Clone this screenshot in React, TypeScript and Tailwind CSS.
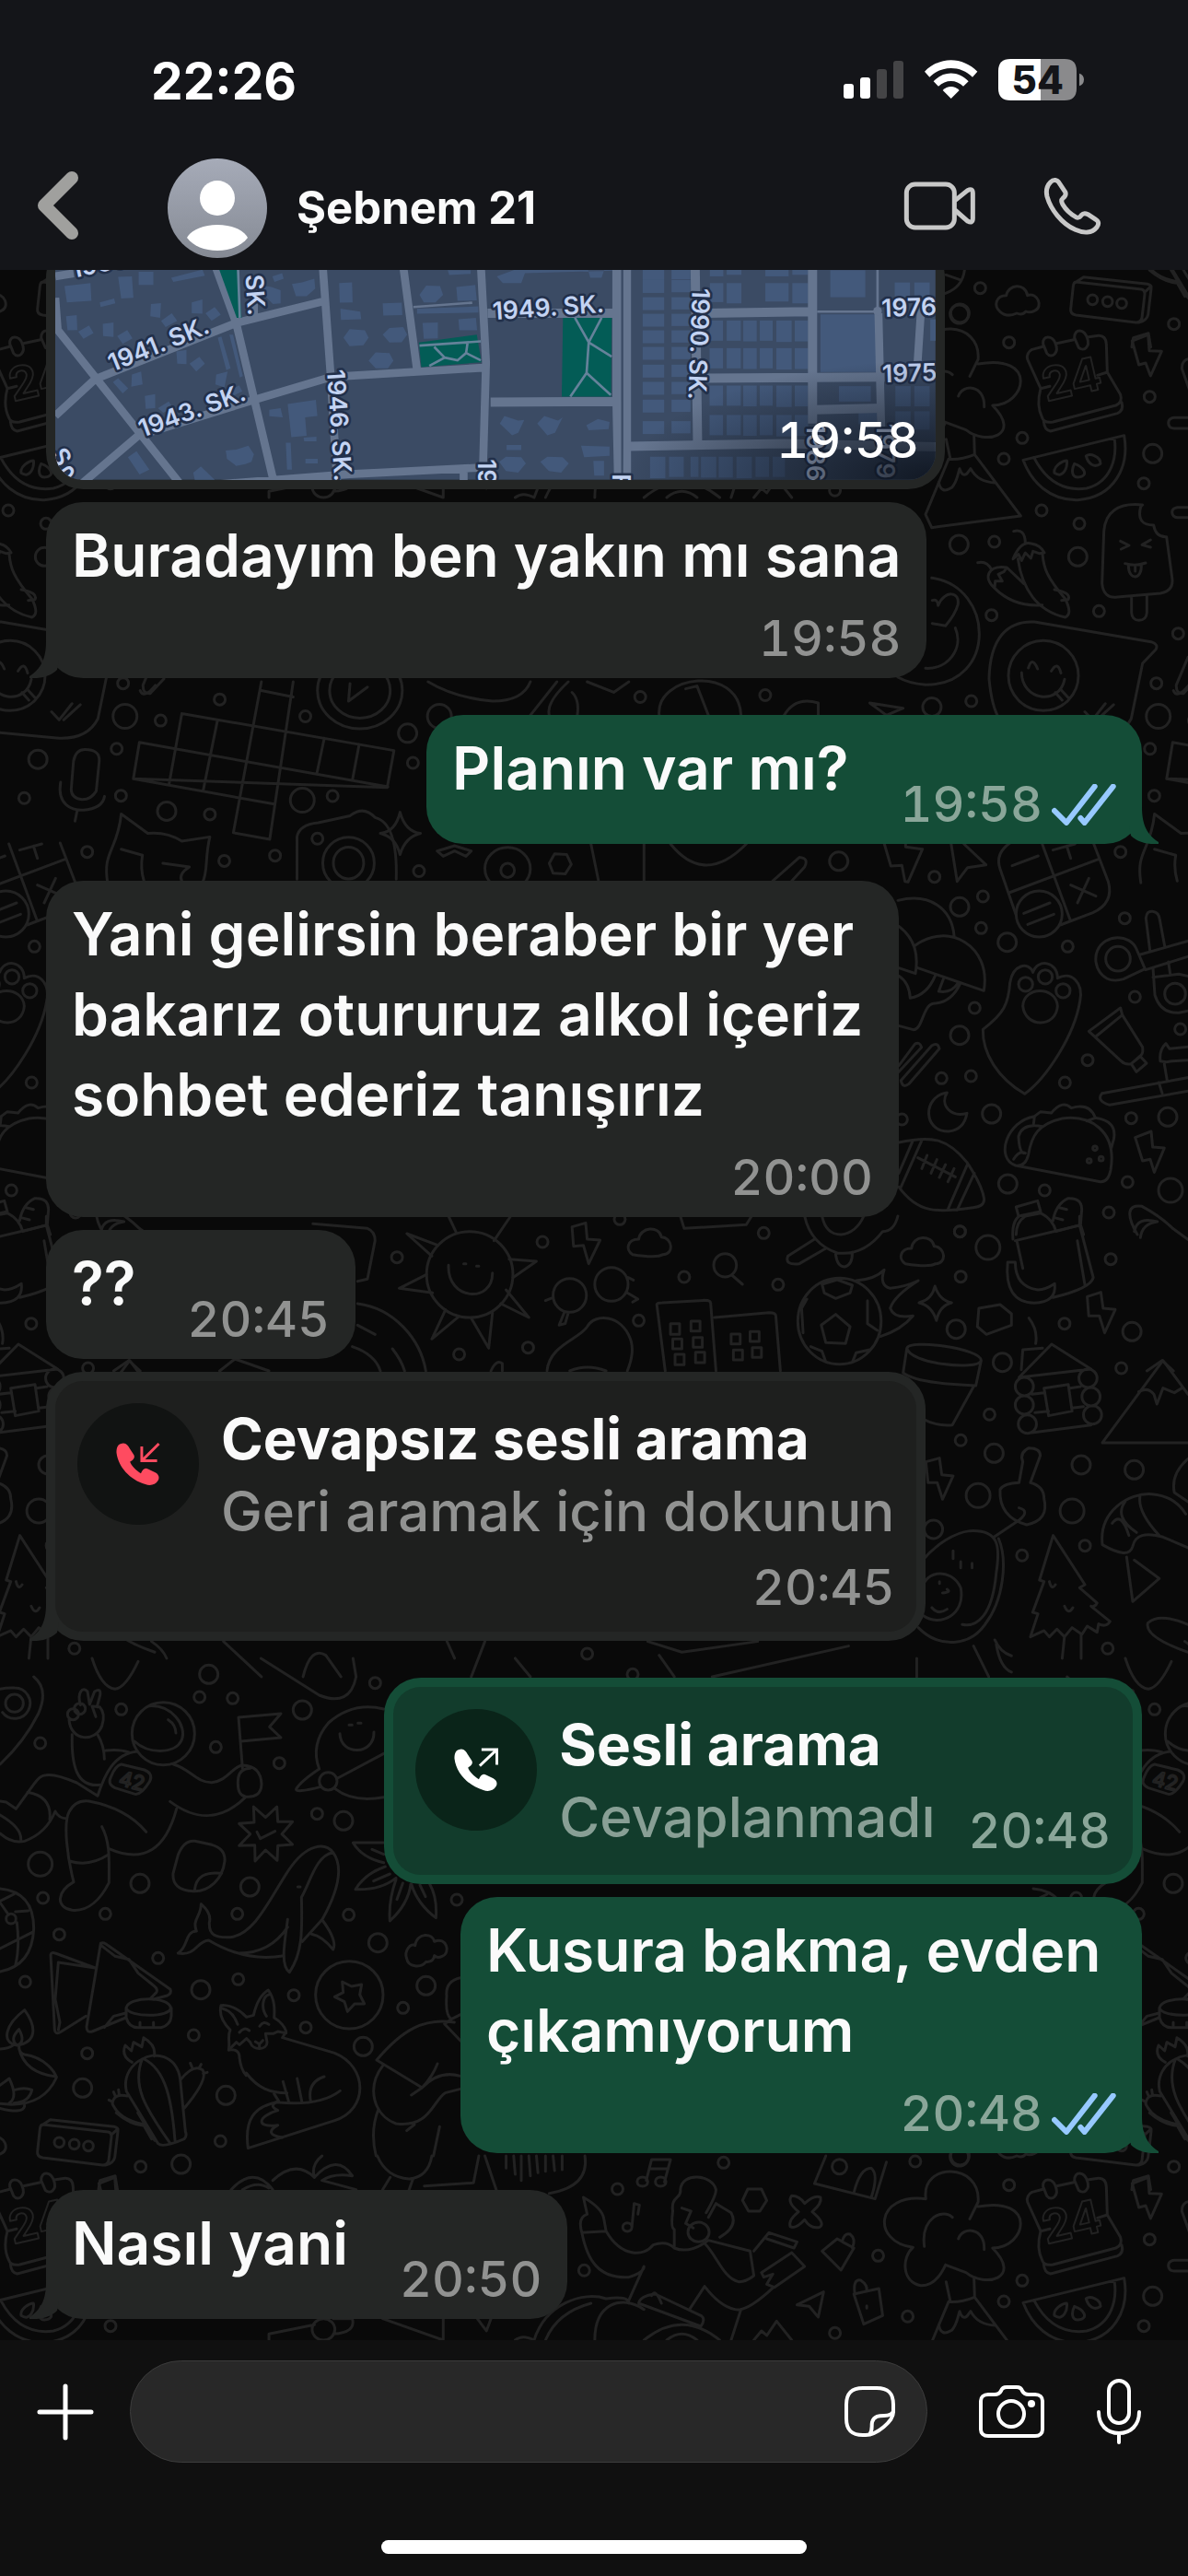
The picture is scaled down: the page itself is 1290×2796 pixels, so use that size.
import { useState } from "react";
import type { ReactNode } from "react";

type Side = "in" | "out";

// ── Wallpaper ───────────────────────────────────────────────────────────────

type Sheet = {
  x: number;
  y: number;
  sx: number;
  sy: number;
  paths: string[];
  dots: [number, number, number][];
};

const TILE_W = 1122;
const TILE_H = 2000;

const SHEETS: Sheet[] = [
  {
    // cassette, calendar, melon, peppers, ice cream
    x: 950, y: 290, sx: 1 / 3, sy: 1 / 3,
    paths: [
      "M408 145C385 125 395 92 428 92C435 55 490 50 497 92C530 80 550 130 520 142Q505 150 492 144Q480 158 462 150Q430 165 408 145Z",
      "M655 48L868 72Q880 74 879 88L870 165Q866 180 850 180L655 156Q636 152 638 136L646 62Q648 48 655 48ZM650 52L680 32L888 55Q902 58 900 70L890 155Q885 175 860 180M878 82L900 62",
      "M693 106a16 16 0 1 0 32 0a16 16 0 1 0 -32 0M742 112a16 16 0 1 0 32 0a16 16 0 1 0 -32 0M788 118a16 16 0 1 0 32 0a16 16 0 1 0 -32 0",
      "M540 395L497 300Q492 280 512 268L550 258M592 248L648 236M692 228L728 223Q752 222 754 250L757 342L800 415Q808 440 785 450L580 504Q550 508 545 490Q525 450 540 395L570 388M725 352L757 342M550 502Q552 530 572 534L790 476Q812 466 804 440",
      "M548 250C545 220 580 222 588 248C602 280 575 300 560 280ZM650 230C650 198 682 200 692 232C702 260 680 276 664 262Z",
      "M838 240L890 220L894 272L934 274L898 354L882 312L860 318Z",
      "M483 628L812 548C830 650 780 750 660 758C570 760 510 700 483 628ZM518 620C560 700 620 730 690 720C770 700 790 620 780 556M585 670C580 650 610 630 625 630C628 650 615 690 585 670ZM650 640C680 650 700 680 662 684C640 684 640 660 650 640ZM688 615C700 605 735 615 735 640C715 655 695 640 688 615Z",
      "M240 625L165 805L185 848L475 810L325 610Q280 628 240 625ZM208 700Q215 740 250 718C268 700 268 680 276 656Q285 685 300 672L312 656Q335 700 392 702M232 560L246 625M323 550L325 610",
      "M872 774C790 765 750 800 746 860L740 1030Q745 1080 790 1074L930 1062Q975 1055 968 1010L950 878Q915 880 908 840Q850 840 866 780ZM836 1074V1125Q838 1150 860 1150Q884 1150 886 1125V1070",
      "M800 892L828 906L802 918M898 888L870 904L898 912M815 965Q850 975 882 963M826 972C826 1020 870 1020 868 970M848 972V990",
      "M452 860Q490 850 490 900M450 950Q475 890 510 900Q540 905 552 930L535 932L515 925L508 948L490 930L478 955L468 935ZM466 950C480 1050 530 1120 620 1140Q645 1130 620 1080C560 1010 550 980 546 935",
      "M335 962Q365 955 380 985M390 1045C350 1010 370 970 430 978L420 992L402 1000L415 1022L392 1022ZM390 1045C430 1085 480 1105 545 1100M430 978L485 1030M585 1050Q640 1060 630 1082L608 1085",
      "M520 1155L900 1220Q925 1228 915 1245L872 1290L835 1470Q800 1540 700 1533L450 1510Q385 1490 372 1340C375 1210 430 1150 520 1155Z",
      "M435 1330a114 114 0 1 0 228 0a114 114 0 1 0 -228 0M500 1305Q512 1265 530 1308M575 1315Q595 1280 606 1322M478 1320C478 1410 600 1430 618 1342M588 1385L610 1410M605 1375L630 1402",
      "M185 1012C390 1040 400 1360 165 1360Q110 1355 75 1335M187 1085Q205 1080 206 1102C225 1050 280 1055 270 1100Q262 1130 230 1168L187 1160M262 1175C290 1240 240 1310 165 1306",
      "M1020 490H975Q956 492 956 508Q958 525 975 525H1030M1030 782H985Q968 785 968 798Q970 815 985 815H1030M895 10Q940 48 985 52L1010 95M965 10L1020 100M1050 300Q1000 290 1000 330L1025 400M1020 1270L982 1360Q980 1390 1005 1388L1050 1340",
      "M230 85Q285 65 292 10M232 25L275 40",
    ],
    dots: [
      [343, 68, 6], [437, 245, 6], [974, 185, 6], [895, 422, 6], [480, 556, 6], [420, 624, 6], [876, 704, 6],
      [543, 792, 6], [666, 835, 6], [389, 894, 6], [380, 1133, 6], [730, 1120, 6], [988, 1193, 6], [917, 1355, 6],
      [275, 153, 10], [905, 607, 10], [274, 903, 10], [661, 943, 10],
    ],
  },
  {
    // pills, paw, razor, taco, football
    x: 930, y: 840, sx: 1 / 3, sy: 1 / 3,
    paths: [
      "M90 225L112 300L148 298L158 350L168 352L215 245L160 238V210M308 225L328 350L362 305L422 296L350 228",
      "M500 225Q450 260 468 310L520 460M664 492L770 452Q840 420 820 350L772 225M605 228L697 478M497 387L790 277M507 299L592 267M640 248L712 228M685 235L698 275M698 362L780 398M757 340L720 420",
      "M520 456a75 75 0 1 0 150 0a75 75 0 1 0 -150 0M545 454L630 420M558 490L643 457",
      "M135 412C240 385 310 440 318 526M138 496Q210 550 192 650L138 632M192 558C300 480 440 560 415 706L200 632M256 658Q230 720 175 730Q172 680 138 658M283 668L268 708Q310 715 330 682M338 682Q310 745 250 748C215 755 215 835 185 833L138 820",
      "M412 832C480 780 495 750 500 680C510 620 560 610 575 646C590 600 655 610 655 665C700 640 740 680 728 740C710 850 620 990 548 1042C460 990 410 910 412 832ZM542 756C545 690 650 690 655 756C650 828 550 828 542 756Z",
      "M528 685a23 23 0 1 0 46 0a23 23 0 1 0 -46 0M592 661a23 23 0 1 0 46 0a23 23 0 1 0 -46 0M650 706a23 23 0 1 0 46 0a23 23 0 1 0 -46 0",
      "M940 635L870 668C800 690 765 620 785 575C810 520 890 520 912 570ZM812 602a40 40 0 1 0 80 0a40 40 0 1 0 -80 0M925 588L1095 540M942 638L1095 590M956 575L943 470Q945 445 965 448Q985 450 988 475L1004 560M966 632L972 720Q990 780 1050 778L1090 770M966 662L1050 652L1095 662M1004 716a34 34 0 1 0 68 0a34 34 0 1 0 -68 0M1016 612L1022 652",
      "M757 838L860 762L866 785L932 890Q935 910 925 918L895 944Q875 948 862 935ZM780 855L866 785M895 944L925 920L945 942L912 970Z",
      "M990 935Q985 900 1008 878L1020 895L1085 888M990 935L1010 938L1028 935L1085 932M1003 945L1012 998M800 1040L1085 988M825 1078L1085 1032M800 1040Q780 1065 825 1078M985 1005L996 1040",
      "M138 950L190 880Q205 870 212 890L138 970M145 998L245 885Q265 872 270 895L170 1010Q150 1025 145 998Z",
      "M295 1038C215 1050 215 1165 300 1164Q350 1160 360 1105C310 1120 270 1080 295 1038Z",
      "M138 1200C250 1175 300 1190 360 1265Q410 1340 416 1385Q415 1410 380 1412C260 1430 200 1430 138 1345M182 1198L138 1300M212 1195L145 1345M362 1270L297 1420M384 1300L328 1420M200 1250L322 1312M230 1242L213 1285M262 1256L243 1300M290 1272L270 1314M318 1285L298 1328",
      "M518 1275L795 1328Q820 1330 828 1290C850 1160 760 1110 670 1122C590 1140 570 1180 560 1240Q550 1280 518 1275ZM518 1275C450 1250 490 1130 580 1115L600 1100L635 1104Q670 1060 700 1088Q760 1070 778 1120Q850 1130 838 1190L830 1218M750 1130L778 1120M577 1140L580 1115M606 1148Q540 1135 528 1180Q530 1230 545 1235M512 1255Q530 1225 550 1235",
      "M770 1219a7 7 0 1 0 14 0a7 7 0 1 0 -14 0M790 1253a7 7 0 1 0 14 0a7 7 0 1 0 -14 0M751 1260a7 7 0 1 0 14 0a7 7 0 1 0 -14 0",
      "M908 1184L960 1164L965 1215L1003 1218L970 1297L957 1255L932 1260Z",
      "M528 1440L520 1410L590 1390L600 1425ZM520 1500Q520 1460 550 1440L600 1430Q640 1450 650 1490L730 1468L740 1500M640 1455Q650 1400 690 1382Q740 1380 733 1430L730 1468M660 1412L685 1418M645 1445L672 1452",
      "M915 1500C880 1440 880 1400 930 1408Q990 1440 1030 1480L1085 1520M905 1490Q915 1440 980 1458Q930 1465 925 1510",
    ],
    dots: [
      [970, 71, 6], [860, 254, 6], [254, 335, 6], [412, 399, 6], [406, 502, 6], [688, 562, 6], [874, 470, 6],
      [385, 762, 6], [907, 726, 6], [1055, 831, 6], [753, 932, 6], [679, 1005, 6], [373, 984, 6], [277, 991, 6],
      [148, 1125, 6], [895, 1121, 6], [883, 1329, 6], [613, 1356, 6], [822, 1428, 6], [337, 1490, 6],
      [336, 433, 10], [491, 548, 10], [336, 851, 10], [440, 1107, 10], [1014, 1117, 10], [493, 1335, 10], [1023, 1356, 13],
    ],
  },
  {
    // astronaut, whale, fox, cactus
    x: 0, y: 1820, sx: 1 / 3, sy: 1 / 3,
    paths: [
      "M0 40Q20 35 48 36a50 50 0 1 1 -40 80M18 86a29 29 0 1 0 58 0a29 29 0 1 0 -58 0M110 0Q160 40 125 120Q80 210 0 285",
      "M225 140C230 210 310 215 332 160Q345 120 325 98L300 96L312 130M262 92C250 50 270 30 285 48L292 90L308 48Q330 35 326 60L316 98M220 122a18 18 0 1 0 36 0a18 18 0 1 0 -36 0M242 104a18 18 0 1 0 36 0a18 18 0 1 0 -36 0",
      "M235 188C232 290 250 360 325 352M318 188Q340 225 340 268M345 240Q390 235 420 246",
      "M430 185a102 102 0 1 0 204 0a102 102 0 1 0 -204 0M485 95C560 90 610 160 592 205C570 255 480 250 438 210M548 140Q572 155 573 183",
      "M448 243C370 250 340 320 318 388L250 345Q180 315 150 320Q130 320 110 350L52 430L20 408L0 405M90 376Q170 390 162 465M0 450Q70 490 68 530M0 510Q40 545 80 535Q150 510 180 438Q190 460 218 462",
      "M395 285L470 303Q500 315 488 340Q460 385 440 382L375 362Q348 350 362 325Q375 290 395 285Z",
      "M565 285C620 300 640 345 690 344C740 340 760 290 790 288Q850 290 852 350Q850 395 800 390Q770 385 776 330Q780 300 815 298M800 392C720 470 640 470 554 406M575 430C540 560 470 610 355 560",
      "M790 298L777 132L915 120L878 163L915 198L785 210",
      "M332 488C360 540 355 600 355 670C330 720 290 765 235 760C180 750 185 700 240 668C220 590 205 480 225 440Q245 400 290 405C370 420 430 450 476 505M226 600Q290 620 352 580",
      "M635 535L690 547Q735 560 732 600C725 660 680 700 630 698Q560 695 564 640L580 580Q600 530 635 535ZM634 695Q640 630 722 640",
      "M826 423L865 458L902 423L905 472L953 472L918 512L953 546L905 550L903 598L865 564L831 600L830 548L779 550L815 512L779 478L828 474ZM837 505L848 527L896 503",
      "M1250 105Q1150 80 1070 150Q1010 220 1040 300M1040 300Q980 340 965 365Q960 380 1045 358M1100 330L1250 250M1092 365Q1150 410 1250 392M1040 340a29 29 0 1 0 58 0a29 29 0 1 0 -58 0M1107 185C1110 260 1220 255 1218 180M1137 157h10M1166 151h10",
      "M682 800C680 840 700 850 750 848C830 840 880 720 940 630C1000 540 1060 540 1085 572C1120 620 1100 700 1050 790L985 862M1085 572C1030 580 1010 670 982 718C985 830 985 900 943 962C910 940 930 850 937 790M682 800Q690 770 655 740C655 780 625 790 640 828C600 830 615 880 580 900C640 910 640 860 680 858C750 900 830 925 925 908M780 900Q880 900 937 815M1050 792Q1100 860 1085 888Q1050 845 1015 838M970 684h8",
      "M165 905Q168 895 180 900L310 948M165 905L178 1150Q180 1165 195 1158L280 1105M190 930L180 1050L195 1125L190 1150M190 930L310 948M328 868Q335 864 345 870L555 1018Q560 1030 545 1038L500 1050M328 868L282 1140Q282 1160 300 1155L410 1110M330 875L375 910L420 920L450 965L500 1005Q520 1020 505 1032L490 1048M340 1142L370 1105L410 1095",
      "M411 1078C420 1040 550 1040 556 1078C555 1110 420 1110 411 1078V1110Q420 1142 450 1142H525Q555 1135 558 1105V1078M456 1125V1140M500 1125V1140",
      "M0 730L45 708M0 735L28 775M50 765L92 762M55 800Q65 880 50 940M0 885L105 832M0 690Q110 700 110 820Q105 940 0 960M20 788a16 16 0 1 0 32 0a16 16 0 1 0 -32 0",
      "M80 1085C20 1130 0 1190 55 1200C120 1190 120 1140 80 1085ZM62 1148Q30 1180 55 1200Q85 1190 62 1148ZM0 1212Q30 1210 45 1198M62 1200Q60 1225 80 1230C150 1240 180 1290 184 1305C150 1380 80 1400 0 1390M62 1210Q80 1290 184 1302M0 1330L30 1308Q60 1370 30 1388M48 1345Q80 1335 104 1345Q95 1385 45 1388M0 1405Q80 1425 80 1395",
      "M463 1245C430 1260 400 1300 412 1350L515 1520Q530 1535 600 1505Q610 1495 604 1480L587 1310C575 1230 500 1220 463 1245ZM463 1245C430 1330 470 1400 555 1520M470 1245C540 1280 560 1380 570 1510M430 1255C400 1240 400 1220 408 1200L428 1218L435 1190L462 1205L468 1175Q510 1200 502 1235M590 1310Q630 1260 660 1280Q680 1310 600 1405M620 1258L625 1270M655 1262L648 1275M675 1288L662 1292M415 1365Q370 1355 366 1390Q390 1445 475 1458M355 1378L366 1384M370 1352L376 1366M386 1345L388 1360",
      "M745 1215C750 1190 740 1170 750 1150C720 1120 715 1090 720 1070Q760 1065 803 1108L826 1102Q840 1040 874 1020C895 1050 895 1080 893 1110Q925 1130 932 1155L920 1175L1090 1225C1200 1270 1200 1410 1090 1445L808 1535C795 1440 830 1400 900 1385M745 1215Q780 1210 780 1240Q785 1280 802 1298M802 1290C840 1340 880 1355 935 1355M725 1080Q760 1090 774 1132M868 1105C850 1080 855 1040 876 1035",
      "M780 1158Q795 1138 812 1152M846 1138Q858 1118 876 1132M745 1215L770 1190L780 1198L803 1178L815 1190C825 1220 870 1215 870 1190L865 1162L890 1162L905 1155L932 1160M832 1188L845 1196L856 1184M845 1196V1210",
      "M900 1385C880 1395 890 1405 905 1412C840 1430 830 1470 905 1460C870 1480 880 1495 920 1500M900 1385Q1040 1400 1108 1348M1012 1382Q1000 1320 1056 1302M968 1308L983 1382M922 1318L940 1382M893 1358L908 1382",
      "M1028 1036a110 110 0 1 0 220 0a110 110 0 1 0 -220 0M1115 993L1145 1008L1178 1002L1172 1035L1187 1065L1155 1065L1132 1090L1122 1058L1090 1042L1118 1028Z",
      "M1325 918C1315 890 1340 865 1352 875C1360 830 1410 835 1415 862C1455 845 1470 900 1440 910Q1425 918 1415 908Q1412 930 1388 928C1370 950 1330 945 1325 918Z",
      "M1250 540L1150 540Q1180 590 1250 605M1212 562L1250 578M1255 618Q1190 640 1158 692Q1240 695 1290 655M1217 665L1270 642M1290 660Q1265 730 1270 795Q1330 740 1338 675M1312 672L1293 725M1340 675Q1360 740 1420 785Q1425 720 1400 675M1368 678L1386 716",
      "M1500 980Q1450 990 1455 1040Q1450 1100 1470 1115L1448 1130L1500 1185M1470 1115L1500 1100M1480 1125C1380 1110 1310 1150 1227 1248L1375 1338L1340 1362M1425 1260Q1410 1300 1375 1338Q1430 1280 1500 1300M1248 1265C1190 1340 1220 1430 1290 1455C1400 1470 1410 1380 1450 1355L1500 1342M1232 1410Q1205 1480 1225 1560M1432 1465L1412 1560M1325 1478L1350 1458",
      "M300 -60Q330 35 375 40Q410 35 450 -50M850 -60L1040 60Q1140 100 1160 0L1150 -60",
    ],
    dots: [
      [650, 66, 6], [758, 70, 6], [395, 106, 6], [131, 216, 6], [703, 229, 6], [910, 281, 6], [1033, 446, 6],
      [1222, 20, 6], [140, 720, 6], [343, 772, 6], [193, 839, 6], [773, 772, 6], [1136, 775, 6], [515, 916, 6],
      [82, 993, 6], [776, 985, 6], [957, 1037, 6], [1313, 1078, 6], [996, 1142, 6], [631, 1167, 6], [284, 1226, 6],
      [718, 1512, 6], [1488, 726, 6], [985, 108, 10], [1119, 469, 10], [456, 673, 10], [814, 684, 10], [1231, 866, 10],
      [1388, 1006, 10], [654, 1019, 10], [1183, 1204, 10], [269, 1339, 10], [736, 1363, 10], [131, 610, 13],
      [680, -8, 10], [2061, -8, 6],
    ],
  },
  {
    // crossword, microphone, cat, camera
    x: 0, y: 740, sx: 0.8227, sy: 0.3827,
    paths: [
      "M240 90L520 195L511 300L176 275L184 172L512 298M176 275L362 347M240 90L223 292M287 110L268 310M387 0L356 447L308 428L345 0M345 25L387 43M428 160L418 262M474 178L465 280",
      "M112 192Q132 192 131 225L127 310Q120 335 108 334Q94 330 94 305L97 225Q100 192 112 192ZM80 285C75 350 95 365 110 364Q135 360 138 325M102 364L99 395",
      "M142 570C135 480 155 480 160 375L195 430Q220 425 240 452L277 440C270 500 275 540 267 570M160 475L188 492Q185 530 190 565M215 515L250 525Q235 545 240 565",
      "M392 560V440Q395 405 420 400L462 380Q480 350 495 385Q525 400 523 560M426 514a34 73 0 1 0 68 0a34 73 0 1 0 -68 0M440 514a20 45 0 1 0 40 0a20 45 0 1 0 -40 0",
      "M528 370Q535 425 555 430Q535 440 528 490Q522 440 502 430Q522 425 528 370Z",
      "M419 25a56 108 0 1 0 112 0a56 108 0 1 0 -112 0M435 25a40 78 0 1 0 80 0a40 78 0 1 0 -80 0M462 5L460 55L485 15",
      "M565 0Q600 45 650 55Q690 55 700 0M735 0L700 95M750 0Q720 60 725 95M755 30Q765 50 762 95M775 0L810 30L830 0M870 95C865 -20 975 -50 978 95M905 20L920 12L935 95M1035 95Q1050 40 1080 60V95M1148 60L1192 75L1170 95Z",
      "M640 530a30 60 0 1 0 60 0a30 60 0 1 0 -60 0M661 535a9 20 0 1 0 18 0a9 20 0 1 0 -18 0M732 488L748 490L754 518L746 545L730 543L725 515ZM780 460L790 565M850 460V565M885 460Q930 580 985 460M1020 565L1055 498Q1068 500 1062 525L1045 565M577 480L600 465L622 480L615 495L600 480L585 495Z",
      "M185 25Q190 50 205 10M68 85L78 108L95 62M84 108L106 65",
    ],
    dots: [
      [290, 50, 6], [165, 98, 13], [212, 110, 6], [403, 98, 6], [154, 190, 6], [50, 220, 10], [32, 330, 6], [220, 367, 10],
      [277, 376, 6], [399, 336, 13], [439, 324, 6], [538, 146, 10], [545, 230, 6], [296, 508, 6], [363, 493, 6],
      [419, 445, 6], [553, 537, 6], [845, 43, 6], [1010, 38, 6], [1230, 72, 10], [1282, 55, 6], [580, 98, 13], [1107, 509, 10],
    ],
  },
  {
    // sun, buildings, football, cabin, avocado, pine
    x: 0, y: 1320, sx: 0.8227, sy: 0.3333,
    paths: [
      "M563 190a57 140 0 1 0 114 0a57 140 0 1 0 -114 0M592 160C590 275 650 285 650 185M612 155h3M629 163h3",
      "M578 95L537 57L570 130M563 190L527 235L571 250M588 305L570 400L605 328M622 332L645 430L650 315M668 240L698 330L661 285M672 140L708 147L677 200M652 80L674 0M602 52L592 0",
      "M755 35L773 22L775 75L792 78L777 155L770 95L757 98Z M1435 262L1453 248L1456 300L1472 304L1458 380L1451 325L1437 325Z M1222 800L1240 788L1243 842L1258 846L1244 922L1237 868L1225 868Z",
      "M835 125C825 110 828 75 843 75C845 35 870 30 873 68C888 70 890 125 875 125C868 135 848 130 835 125ZM1195 155C1185 140 1188 105 1203 105C1205 60 1230 60 1233 98C1248 100 1250 155 1235 155C1228 165 1208 160 1195 155Z",
      "M730 258a22 55 0 1 0 44 0a22 55 0 1 0 -44 0M785 222a22 55 0 1 0 44 0a22 55 0 1 0 -44 0M745 312L738 355L746 350L750 315M828 250L842 270L835 280M730 265L720 275M829 200L836 208",
      "M942 160a15 38 0 1 0 30 0a15 38 0 1 0 -30 0M966 192L980 222",
      "M878 504L867 290Q866 282 874 282L930 274Q938 274 938 284L945 504M943 330L1015 314Q1024 314 1024 325L1030 504",
      "M885 350h12v35h-12zM912 342h12v32h-12zM888 400h12v32h-12zM915 395h12v32h-12zM891 450h12v34h-12zM918 443h12v34h-12zM965 384h12v32h-12zM990 376h12v32h-12zM968 436h12v32h-12zM993 428h12v32h-12z",
      "M1053 342a55 140 0 1 0 110 0a55 140 0 1 0 -110 0M1103 320L1122 360L1116 415L1090 412L1084 355ZM1085 222L1105 207L1125 225L1122 250L1103 268L1088 250ZM1065 270L1058 300L1060 380M1145 275V350L1158 372M1070 425L1085 440L1090 475M1125 475L1130 445L1148 435",
      "M1130 210Q1155 205 1167 175Q1160 225 1175 235Q1195 230 1212 210Q1180 260 1175 300Q1180 335 1205 325Q1190 370 1162 392",
      "M1234 228Q1240 275 1256 282Q1240 292 1236 340Q1230 292 1213 282Q1230 272 1234 228ZM1292 300L1320 288L1335 318V355L1302 385L1290 360Z",
      "M722 504C725 420 765 400 775 360C785 315 820 320 832 400C838 440 832 480 828 504M752 504Q775 480 800 504M648 504Q655 465 663 480V504",
      "M472 285C520 300 555 400 562 504M472 355L495 385M465 425Q495 450 502 504M518 432Q530 470 534 504M413 25L485 40Q495 50 495 80L485 205L472 212M150 504L170 470L185 504M290 504L310 465L355 504",
      "M1197 430C1200 400 1295 430 1295 470C1290 505 1200 480 1197 430L1192 510Q1210 545 1288 552L1295 470M1285 555L1257 680Q1235 685 1218 660",
      "M1345 525L1388 417L1440 498ZM1348 500L1350 435L1376 430M1358 332Q1370 370 1367 415M1340 555a12 30 0 1 0 24 0a12 30 0 1 0 -24 0M1340 615a12 30 0 1 0 24 0a12 30 0 1 0 -24 0M1344 677a12 30 0 1 0 24 0a12 30 0 1 0 -24 0M1424 528a12 30 0 1 0 24 0a12 30 0 1 0 -24 0M1428 588a12 30 0 1 0 24 0a12 30 0 1 0 -24 0M1430 647a12 30 0 1 0 24 0a12 30 0 1 0 -24 0M1378 560L1410 548L1415 635L1384 650ZM1362 580L1378 575M1412 560L1426 555M1366 640L1384 635M1415 625L1430 620M1362 705L1440 680",
      "M1568 738H1455L1535 470L1568 580M1503 572Q1515 555 1523 580L1527 612L1535 560L1550 575L1560 560",
      "M1340 80L1425 30L1443 200Q1440 235 1390 265M1337 75Q1335 20 1345 0M1425 0V30M1330 150Q1325 280 1365 283Q1395 280 1392 220Q1380 240 1370 240Q1340 230 1340 150ZM1342 80L1350 170M1422 80L1432 225",
      "M1320 890Q1318 980 1355 1005Q1385 990 1378 920Q1378 880 1360 868L1373 780Q1373 755 1358 755Q1345 770 1350 800L1345 868Q1325 870 1320 890ZM1345 950Q1360 960 1345 990L1312 1045",
      "M1218 1120C1235 1070 1260 1030 1280 1025C1320 1020 1320 1080 1315 1160C1310 1300 1290 1340 1270 1330M1318 1050C1330 1120 1325 1250 1300 1330C1280 1400 1240 1410 1212 1340M1215 1240C1215 1150 1255 1140 1268 1210C1275 1300 1240 1340 1218 1300M1240 1190v6M1250 1215q6 10 -6 12M1230 1275Q1238 1300 1250 1280M1258 1090v25M1268 1125v20M1283 1130v15",
      "M1390 1040L1432 1200L1425 1210L1448 1260Q1445 1275 1440 1270L1465 1320Q1460 1340 1450 1328L1448 1355L1435 1335L1428 1362L1415 1340L1405 1370L1395 1345L1385 1370L1378 1350L1360 1370L1370 1295L1363 1290L1378 1190L1372 1185ZM1405 1368L1402 1440M1427 1360V1440M1385 1190Q1388 1220 1393 1200M1405 1270Q1410 1300 1416 1275",
      "M1455 1070C1450 960 1490 900 1520 905Q1550 910 1565 970M1455 1070Q1490 1120 1495 1075Q1500 1020 1535 1045L1568 1080M1468 1000Q1480 960 1490 1040M1485 930Q1470 980 1500 1030M1505 908Q1500 960 1530 1040M1487 1110L1495 1255L1530 1180L1497 1120M1568 790Q1545 840 1550 900L1568 930",
      "M1568 1330Q1530 1290 1515 1325Q1510 1370 1568 1420M1313 1380Q1320 1420 1335 1432M1285 1400L1305 1500M200 1385Q215 1410 220 1440M295 1385L345 1500M590 1385L600 1440M640 1385L622 1500M855 1385L900 1420L1000 1385M400 1500Q410 1400 430 1430L450 1500",
      "M680 1440L700 1500M870 1430L890 1500M1120 1400L940 1500M1210 1440V1500M1315 1395Q1320 1470 1335 1485",
      "M1062 0Q1070 90 1105 120Q1140 130 1165 50Q1180 50 1185 0M1085 0Q1090 60 1110 60Q1130 55 1140 0M1075 75L1040 130Q1035 160 1055 155L1090 105M1103 125Q1105 165 1115 165Q1125 160 1125 118M898 0L903 40L985 28L992 0",
    ],
    dots: [
      [524, 134, 6], [716, 84, 6], [1008, 55, 6], [1267, 50, 6], [1304, 102, 13], [903, 198, 6], [1027, 223, 6],
      [1268, 197, 6], [1466, 140, 6], [843, 340, 6], [1262, 368, 10], [1405, 350, 6], [1494, 376, 10], [606, 450, 6],
      [697, 428, 6], [1323, 476, 10], [1480, 495, 6], [1306, 646, 6], [1268, 730, 6], [1312, 772, 10], [1291, 910, 13],
      [1427, 810, 10], [1497, 826, 10], [1415, 960, 13], [1232, 1020, 10], [1349, 1105, 6], [1432, 1073, 6],
      [1462, 1408, 6], [775, 1425, 6], [818, 10, 6],
    ],
  },
  {
    // dancer, notes, lock, broccoli
    x: 0, y: 2340, sx: 0.8227, sy: 0.3333,
    paths: [
      "M668 0V40M678 0L680 60M688 0V80M698 0L700 65M708 0L710 55M720 0V50M730 0L732 48M742 0V45M772 0Q778 100 725 122",
      "M853 80L860 12L885 12L877 85M858 42L882 42M841 84a7 15 0 1 0 14 0a7 15 0 1 0 -14 0M865 84a7 15 0 1 0 14 0a7 15 0 1 0 -14 0M834 232L837 155L844 160L842 190M822 232a6 14 0 1 0 12 0a6 14 0 1 0 -12 0",
      "M768 250Q762 200 775 190L770 135Q795 170 797 205L800 245L768 250C775 340 790 400 830 395Q850 380 850 360L830 470M800 245C820 330 850 330 862 290Q880 275 890 300Q910 320 935 275L990 310L995 390Q985 410 975 410C955 400 945 320 930 285",
      "M888 180C885 130 900 140 898 110C900 50 940 60 945 110Q945 130 932 185M888 180Q885 235 890 240L890 295M900 170L912 180L905 220L915 235M908 248a14 32 0 1 0 28 0a14 32 0 1 0 -28 0M935 200L945 155L965 185Q975 230 950 265M995 310L1015 250L1052 280L1048 300L1012 270",
      "M1005 380L1045 315L1062 360L1022 428L1012 418L1020 385L1008 395ZM930 425Q950 490 970 500Q985 510 1020 430M930 425L910 500M978 500L965 600",
      "M987 108L1005 108L1012 145L1003 180L988 180L980 145ZM1045 130Q1055 130 1062 155Q1075 125 1083 135Q1085 155 1072 182Q1090 220 1082 232Q1070 240 1062 208Q1050 240 1043 230Q1040 210 1054 182Q1038 150 1045 130Z",
      "M1085 310L1105 270L1112 280L1127 300L1110 372ZM1112 275Q1115 250 1122 255Q1130 270 1125 300M1127 450L1160 432L1165 520L1140 548ZM1128 445Q1126 400 1136 405Q1145 420 1144 438M1052 485L1087 443L1080 525L1068 490ZM1144 488v8",
      "M1090 0L1075 90L1155 140L1170 20M1127 120Q1135 40 1150 40Q1160 60 1150 135",
      "M1248 355Q1235 425 1215 422C1190 410 1190 330 1205 298C1150 280 1155 120 1222 140C1215 20 1295 20 1291 150L1280 205M1291 165C1370 130 1355 300 1310 300C1350 400 1300 430 1275 380L1248 355M1220 295C1215 200 1245 170 1257 200M1265 270C1270 230 1300 230 1299 305",
      "M705 600C720 480 770 440 800 465Q830 455 830 480M720 600Q735 510 780 480M785 600C785 480 820 450 850 500M843 480L925 555Q932 530 925 520L865 450Q845 455 843 480ZM860 455Q865 430 873 480M850 600Q900 500 950 600M880 600Q900 560 920 600M995 600L1005 570L1012 585L1025 538L1045 600M680 600Q690 580 705 600",
      "M355 600V580L415 550M412 565a15 35 0 1 0 30 0a15 35 0 1 0 -30 0M440 530L465 530Q470 575 440 580M505 530L585 600M585 530V600M630 530L642 570L648 530",
      "M305 110Q335 30 360 110M320 110Q340 80 355 105M360 80Q390 10 415 70Q410 30 425 0M415 70Q445 -10 465 65Q440 55 425 80L470 110M498 0Q510 70 540 75Q565 70 570 0M515 70L505 110M545 75L540 110M560 98L625 88L632 0M640 0L655 110M130 110L132 80L152 65L155 110",
    ],
    dots: [
      [239, 27, 10], [955, 22, 6], [1208, 18, 6], [1267, 0, 10], [1108, 35, 8], [815, 108, 6], [771, 373, 6],
      [1159, 325, 6], [1198, 523, 6], [1102, 577, 6],
    ],
  },
];

function Wallpaper() {
  const offsets = [-1, 0, 1].flatMap((col) => [-1, 0, 1].map((row) => [col * TILE_W, row * TILE_H]));
  return (
    <svg
      aria-hidden="true"
      className="absolute inset-0 h-full w-full"
      viewBox="0 293 1290 2247"
      preserveAspectRatio="xMidYMin slice"
      fill="none"
      stroke="#222222"
      strokeWidth="3"
      strokeLinecap="round"
      strokeLinejoin="round"
    >
      <defs>
        <g id="doodles">
          {SHEETS.map((sheet) => (
            <g key={sheet.y + sheet.x}>
              <g transform={`translate(${sheet.x} ${sheet.y}) scale(${sheet.sx} ${sheet.sy})`}>
                {sheet.paths.map((d) => (
                  <path key={d} d={d} vectorEffect="non-scaling-stroke" />
                ))}
              </g>
              {sheet.dots.map(([x, y, r]) => (
                <circle key={`${x}-${y}`} cx={sheet.x + x * sheet.sx} cy={sheet.y + y * sheet.sy} r={r} />
              ))}
            </g>
          ))}
          <g fontFamily="Inter, sans-serif" strokeWidth="2">
            <text x="1136" y="436" fontSize="50" fontWeight="700" transform="rotate(-13 1136 436)">24</text>
            <text x="128" y="1937" fontSize="22" transform="rotate(15 128 1937)">42</text>
          </g>
        </g>
      </defs>
      {offsets.map(([x, y]) => (
        <use key={`${x}:${y}`} href="#doodles" x={x} y={y} />
      ))}
    </svg>
  );
}

// ── Icons ───────────────────────────────────────────────────────────────────

function StatusIcons() {
  return (
    <svg className="h-[45px] w-[262px]" viewBox="48 72 786 135" role="img" aria-label="Sinyal, Wi-Fi, pil 54">
      <g fill="#fff">
        <rect x="48" y="153" width="33" height="48" rx="9" />
        <rect x="102" y="132" width="33" height="69" rx="9" />
        <path d="M312 113C360 63 436 63 484 113L468 131C429 92 367 92 328 131Z" />
        <path d="M341 145C373 110 423 110 455 145L438 161C415 138 381 138 357 161Z" />
        <path d="M371 174C386 158 410 158 425 174L398 201Z" />
      </g>
      <g fill="#444446">
        <rect x="156" y="105" width="33" height="96" rx="9" />
        <rect x="210" y="78" width="33" height="123" rx="9" />
      </g>
      <path d="M690 72H768Q807 72 807 111V168Q807 207 768 207H690Z" fill="#8a8a8c" />
      <path d="M690 72H592Q552 72 552 111V168Q552 207 592 207H690Z" fill="#fff" />
      <path d="M816 119Q831 124 831 139Q831 155 816 160Z" fill="#8a8a8c" />
      <text x="680" y="185" textAnchor="middle" fontFamily="Inter, sans-serif" fontWeight="800" fontSize="126" fill="#141519">
        54
      </text>
    </svg>
  );
}

function VideoIcon() {
  return (
    <svg className="h-[57px] w-[80px]" viewBox="240 464 240 171" fill="none" stroke="#c8c8c8" strokeWidth="15" strokeLinejoin="round">
      <rect x="253" y="479" width="156" height="141" rx="28" />
      <path d="M411 532L452 499Q469 490 469 508V590Q469 608 452 599L411 563" />
    </svg>
  );
}

function PhoneIcon() {
  return (
    <svg className="h-[65px] w-[65px]" viewBox="694 450 195 195" fill="none" stroke="#c8c8c8" strokeWidth="15" strokeLinejoin="round">
      <path d="M720 470C730 460 742 462 748 472L768 502C772 511 768 517 760 523C753 529 756 536 760 543C770 560 787 575 803 584C812 588 816 584 821 577C827 570 834 571 842 575L868 592C878 598 878 607 871 617C855 637 828 637 801 625C756 605 721 559 709 517C705 500 708 482 720 470Z" />
    </svg>
  );
}

function CallGlyph({ missed }: { missed: boolean }) {
  return (
    <svg
      className={`h-[48px] w-[50px] ${missed ? "text-[#ff4b60]" : "text-white"}`}
      viewBox="-1 -1 50 49"
      fill="currentColor"
    >
      <path d="M5 1C10 -1 13 3 15 7L19 13C21 16 19 19 15 21C16 25 22 31 27 34C29 30 31 27 35 29L43 33C47 35 48 39 46 42C43 47 37 48 32 46C15 41 2 27 0 11C0 6 1 2 5 1Z" />
      <path
        d={missed ? "M47 1L29 19M28 4V20H45" : "M28 19L46 2M30 1H47V18"}
        fill="none"
        stroke="currentColor"
        strokeWidth="3"
      />
    </svg>
  );
}

function ReadTicks() {
  return (
    <svg className="h-[45px] w-[70px]" viewBox="641 26 210 135" fill="none" stroke="#97c9ff" strokeWidth="18" strokeLinecap="round" strokeLinejoin="round" role="img" aria-label="Okundu">
      <path d="M650 113L689 152L781 34M735 137L748 152L841 34" />
    </svg>
  );
}

// ── Map preview ─────────────────────────────────────────────────────────────

const ROADS = [
  { w: 26, d: "M60 60L120 50M60 130L68 235L470 740M60 515L190 395L650 212L940 140M130 750L330 580L710 462L960 388L1455 358M580 20L650 212L775 740M932 20L958 380L980 740M1194 20L1240 365M1448 20L1465 340L1455 690M560 740L1020 705L1460 683M1392 690V730M60 640L110 740M708 60V190" },
  { w: 30, d: "M1480 470L1880 468M1470 180H1880M1892 20V460L1898 740M2178 180L2520 175M2180 392L2765 388M2530 20V540M2540 495L2760 490M1930 614L2440 605L2931 616M2147 20L2155 600" },
  { w: 26, d: "M1925 20V740M2745 180L2755 600M2885 150L2872 350" },
  { w: 8, d: "M2545 175H2740M2742 20V170M1228 160L1420 146" },
];

const BUILDINGS =
  "M90 92L175 82L178 140L98 145ZM265 62L310 60L315 130L275 132ZM332 45H380V88H332ZM205 145L252 132L256 148L208 160ZM438 65L540 38L548 58L445 78ZM372 150L405 147L402 195L370 190ZM505 145L540 135V182L505 180ZM405 205L440 180L458 205L420 225ZM550 180L580 160L600 185L570 205ZM95 190L130 186L132 235L100 236ZM135 240L170 220L185 245L152 264ZM215 215L250 210V258L216 255ZM262 255L295 235L312 262L280 280ZM455 305L488 300V346L458 345ZM498 345L530 322L548 345L520 370ZM590 260L602 256L632 360L618 366ZM628 250L640 250L672 385L662 390ZM585 380L622 370L612 422L582 412ZM248 405L265 392L298 425L280 442ZM310 380L340 370L345 412L308 420ZM352 450L386 444V490L355 492ZM395 490L430 468L445 490L412 505ZM615 440L660 415L670 435L640 450ZM297 650L325 630L367 690L335 706ZM510 700L535 680L580 723H515ZM616 628L650 625L690 612L708 640L700 665L680 672L650 678L620 655ZM758 495L795 490L802 520L758 516ZM818 476L910 463L915 515L875 520L880 580L830 584ZM870 586L912 583V598H872ZM812 602H828L832 690H816ZM876 655H916V670H876ZM735 90L765 95L795 105V148L770 150L740 120ZM832 85L865 80L905 68L908 100L880 125H845ZM768 60L800 50L805 68L775 78ZM986 82L1028 80L1030 145L988 146ZM990 165L1055 175L1058 200L992 202ZM1128 148L1190 146L1192 186L1130 188ZM1000 260L1020 232L1070 236L1082 260L1065 285L1020 288ZM1128 250L1150 228L1195 225L1208 250L1190 275L1150 276ZM1082 335L1105 308L1150 310L1163 335L1145 360L1105 360ZM1248 120L1270 90L1315 92L1325 120L1300 145L1262 145ZM1368 95L1430 88L1435 138L1372 140ZM1258 212L1308 210V262L1262 264ZM1375 200L1432 195L1436 236H1378ZM1240 165L1440 158V178L1240 182ZM1340 40H1415V52L1345 56ZM1995 38H1560L1500 60L1520 82H1580L1592 50ZM1798 40H1850L1842 65H1805ZM1510 540L1525 515L1570 530L1590 528L1570 570L1550 578ZM1632 540L1655 515L1700 530L1715 520L1690 570L1665 578ZM1792 545L1830 525L1868 535L1865 558L1800 562ZM1532 610H1580V626H1532ZM1775 612L1868 615V645L1785 650ZM1508 665L1530 648L1580 650L1595 670L1570 700L1530 695ZM1642 665L1665 648L1715 650L1735 670L1710 700L1670 695ZM1815 662H1850V710H1818Z";

// block rows on the eastern half: x, y, width, height
const BLOCKS = [
  ...[30, 72, 128, 182, 236, 290, 348, 404, 462, 532].flatMap((y) => [[1976, y, 70, 42], [2070, y, 62, 40]]),
  ...[30, 82].flatMap((y) => [[2195, y, 44, y === 30 ? 30 : 62], [2250, y, 48, y === 30 ? 25 : 66], [2376, y, 76, y === 30 ? 30 : 60], [2464, y, 52, y === 30 ? 25 : 66]]),
  ...[204, 294, 416, 512].flatMap((y) => [[2194, y, 44, 66], [2250, y, 46, 66], [2304, y, 44, 68], [2358, y, 42, 66], [2412, y, 50, 70], [2472, y, 44, 68]]),
  [2000, 648, 50, 70], [2062, 648, 48, 66], [2132, 648, 26, 66], [2166, 648, 50, 68], [2224, 648, 46, 68], [2282, 648, 50, 70], [2344, 648, 44, 66], [2400, 648, 40, 66],
  [2588, 40, 114, 88], [2556, 184, 188, 188], [2616, 418, 104, 50], [2680, 502, 60, 40],
  [2798, 80, 50, 66], [2862, 80, 50, 66], [2800, 418, 50, 66], [2862, 418, 50, 66], [2800, 500, 50, 60], [2862, 500, 50, 60], [2914, 200, 20, 70],
];

const STREETS: [string, number, number, number][] = [
  ["1936. SK.", 118, 66, -12],
  ["1941. SK.", 246, 372, -22],
  ["1943. SK.", 344, 586, -20],
  ["SK.", 680, 56, 86],
  ["1946. SK.", 946, 366, 86],
  ["1949. SK.", 1488, 202, -4],
  ["1990. SK.", 2138, 98, 92],
  ["1976", 2756, 192, -2],
  ["1975", 2758, 406, -2],
  ["1986", 2512, 540, 90],
  ["1979", 2738, 540, 90],
  ["19", 1438, 656, 90],
  ["F", 1876, 704, 90],
  ["S", 96, 730, -50],
  ["S", 42, 640, 60],
];

function MapPreview() {
  return (
    <svg className="block h-auto w-full rounded-b-[30px]" viewBox="60 -57 2871 780" role="img" aria-label="Konum">
      <defs>
        <radialGradient id="map-shade" cx="1" cy="1" r="0.5" gradientTransform="translate(0.3 0) scale(0.7 1)">
          <stop offset="0" stopColor="#0c121c" stopOpacity="0.9" />
          <stop offset="1" stopColor="#0c121c" stopOpacity="0" />
        </radialGradient>
      </defs>
      <rect x="60" y="-57" width="2871" height="780" fill="#3b4b64" />
      <g fill="#43597b">
        <path d={BUILDINGS} />
        {BLOCKS.map(([x, y, w, h], i) => (
          <rect key={i} x={x} y={y} width={w} height={h} />
        ))}
      </g>
      <g fill="none" stroke="#65758f">
        {ROADS.map((road) => (
          <path key={road.w + road.d} d={road.d} strokeWidth={road.w} strokeLinejoin="round" />
        ))}
      </g>
      <path d="M1909 20V740" stroke="#3b4b64" strokeWidth="6" />
      <g fill="#035c56">
        <path d="M592 30H655L668 195H652Z" />
        <path d="M1246 276L1435 250L1450 340L1254 356Z" />
        <path d="M1716 195H1875L1873 452H1712Z" />
      </g>
      <g fill="none" stroke="#65829a" strokeWidth="8">
        <path d="M656 30L662 195M1248 286L1448 272M1296 290L1330 325L1280 352M1330 325L1372 334L1400 310L1448 334M1400 310L1405 276" />
        <path d="M1755 195L1800 275L1842 195M1800 275L1875 322M1800 275L1793 375L1740 452M1793 375L1872 447" />
      </g>
      <circle cx="2742" cy="173" r="14" fill="#65758f" />
      <g fontFamily="Inter, sans-serif" fontWeight="600" fontSize="80" fill="#c3d3f2" stroke="#22304a" strokeWidth="16" strokeLinejoin="round" paintOrder="stroke">
        {STREETS.map(([name, x, y, angle]) => (
          <text key={name + x} x={x} y={y} transform={`rotate(${angle} ${x} ${y})`}>
            {name}
          </text>
        ))}
      </g>
      <rect x="60" y="-57" width="2871" height="780" fill="url(#map-shade)" />
    </svg>
  );
}

// ── Bubbles ─────────────────────────────────────────────────────────────────

function Tail({ side }: { side: Side }) {
  return (
    <svg
      aria-hidden="true"
      className={`absolute bottom-0 h-[40px] w-[32px] ${
        side === "out" ? "-right-[18px] text-[#144d37]" : "-left-[18px] -scale-x-100 text-[#242625]"
      }`}
      viewBox="0 0 32 40"
      fill="currentColor"
    >
      <path d="M14 0C14 20 20 30 32 38V40C18 41 8 37 2 31L0 20V0Z" />
    </svg>
  );
}

function Bubble({ side, tail, className = "", children }: { side: Side; tail?: boolean; className?: string; children: ReactNode }) {
  return (
    <li
      className={`relative shrink-0 rounded-[40px] whitespace-nowrap ${
        side === "out" ? "self-end bg-[#144d37]" : "self-start bg-[#242625]"
      } ${className}`}
    >
      {tail && <Tail side={side} />}
      {children}
    </li>
  );
}

function Time({ value, side, read }: { value: string; side: Side; read?: boolean }) {
  return (
    <span
      className={`flex items-center justify-end gap-2.5 text-[54px] leading-[66px] font-medium tabular-nums ${
        side === "out" ? "text-[#8aa699]" : "text-[#919291]"
      }`}
    >
      <time>{value}</time>
      {read && <ReadTicks />}
    </span>
  );
}

type MessageProps = { side: Side; lines: string[]; time: string; stacked?: boolean; read?: boolean; tail?: boolean; className?: string };

function Message({ side, lines, time, stacked, read, tail, className = "" }: MessageProps) {
  return (
    <Bubble side={side} tail={tail} className={`flex px-7 pt-3.5 pb-2.5 ${stacked ? "flex-col gap-3.5" : "gap-14"} ${className}`}>
      <p className={`text-[64px] leading-[87px] font-semibold text-[#fafafa] ${stacked ? "" : "pb-[29px]"}`}>
        {lines.map((line) => (
          <span key={line} className="block">{line}</span>
        ))}
      </p>
      <div className="self-end">
        <Time value={time} side={side} read={read} />
      </div>
    </Bubble>
  );
}

type CallProps = { side: Side; title: string; note: string; time: string; tail?: boolean; className?: string };

function CallMessage({ side, title, note, time, tail, className = "" }: CallProps) {
  const missed = side === "in";
  return (
    <Bubble side={side} tail={tail} className={`p-2.5 ${className}`}>
      <button
        type="button"
        className={`relative flex w-full rounded-[30px] px-6 pt-6 pb-[15px] text-left ${
          missed ? "flex-col gap-0.5 bg-[#1e1f1e]" : "items-end gap-9 bg-[#123c2c]"
        }`}
      >
        <span className="flex gap-6">
          <span className={`flex size-[132px] shrink-0 items-center justify-center rounded-full ${missed ? "bg-[#111312]" : "bg-[#0a2419]"}`}>
            <CallGlyph missed={missed} />
          </span>
          <span className="flex flex-col pb-[9px] leading-[78px]">
            <span className="text-[62px] font-bold text-[#fafafa]">{title}</span>
            <span className={`text-[60px] font-medium ${missed ? "text-[#919291]" : "text-[#889f95]"}`}>{note}</span>
          </span>
        </span>
        <span className={missed ? "self-end" : ""}>
          <Time value={time} side={side} />
        </span>
      </button>
    </Bubble>
  );
}

// ── Screen ──────────────────────────────────────────────────────────────────

export default function App() {
  const [draft, setDraft] = useState("");

  return (
    <div className="flex h-screen flex-col overflow-hidden bg-[#090909] font-['Inter','Liberation_Sans',sans-serif]">
      {/* Header */}
      <header className="shrink-0 bg-[#141519] pb-[13px]">
        <div className="flex h-[172px] items-center justify-between pr-[112px] pl-[164px]">
          <time className="pt-1 text-[55px] leading-[66px] font-bold text-white">22:26</time>
          <StatusIcons />
        </div>
        <div className="flex h-[108px] items-center pr-[93px] pl-[38px]">
          <button type="button" aria-label="Geri" className="pb-1">
            <svg className="h-[76px] w-[48px]" viewBox="0 0 48 76" fill="none" stroke="#a0a09e" strokeWidth="14" strokeLinecap="round" strokeLinejoin="round">
              <path d="M40 7L10 37L40 67" />
            </svg>
          </button>
          <svg className="ml-24 size-[108px] rounded-full" viewBox="0 0 108 108" role="img" aria-label="Profil fotoğrafı">
            <defs>
              <linearGradient id="avatar" x1="0" y1="0" x2="0" y2="1">
                <stop offset="0" stopColor="#a6abb8" />
                <stop offset="1" stopColor="#858a94" />
              </linearGradient>
            </defs>
            <rect width="108" height="108" fill="url(#avatar)" />
            <circle cx="54" cy="43" r="19" fill="#fff" />
            <path d="M21 86C25 78 38 72 54 72C70 72 83 78 87 86C80 95 68 100 54 100C40 100 28 95 21 86Z" fill="#fff" />
          </svg>
          <h1 className="ml-8 text-[49px] leading-[60px] font-bold text-[#fafafa]">Şebnem 21</h1>
          <div className="ml-auto flex items-center gap-[72px] pb-1.5">
            <button type="button" aria-label="Görüntülü arama"><VideoIcon /></button>
            <button type="button" aria-label="Sesli arama"><PhoneIcon /></button>
          </div>
        </div>
      </header>

      {/* Conversation */}
      <main className="relative flex min-h-0 flex-1 flex-col justify-end overflow-hidden">
        <Wallpaper />
        <ul className="relative flex flex-col px-[50px] pb-[23px]">
          <Bubble side="in" className="w-[82%] px-2.5 pb-2.5">
            <MapPreview />
            <time className="absolute right-[28px] bottom-5 text-[54px] leading-[66px] font-medium text-white tabular-nums">19:58</time>
          </Bubble>
          <Message side="in" lines={["Buradayım ben yakın mı sana"]} time="19:58" stacked tail className="mt-3.5" />
          <Message side="out" lines={["Planın var mı?"]} time="19:58" read tail className="mt-10" />
          <Message
            side="in"
            lines={["Yani gelirsin beraber bir yer", "bakarız otururuz alkol içeriz", "sohbet ederiz tanışırız"]}
            time="20:00"
            stacked
            className="mt-10 min-w-[926px]"
          />
          <Message side="in" lines={["??"]} time="20:45" className="mt-3.5" />
          <CallMessage side="in" title="Cevapsız sesli arama" note="Geri aramak için dokunun" time="20:45" tail className="mt-3.5" />
          <CallMessage side="out" title="Sesli arama" note="Cevaplanmadı" time="20:48" className="mt-10" />
          <Message side="out" lines={["Kusura bakma, evden", "çıkamıyorum"]} time="20:48" stacked read tail className="mt-3.5 min-w-[740px]" />
          <Message side="in" lines={["Nasıl yani"]} time="20:50" tail className="mt-10" />
        </ul>
      </main>

      {/* Composer */}
      <footer className="shrink-0 bg-[#101010] pt-[22px] pb-6">
        <div className="flex items-center pr-[50px] pl-[40px] text-white">
          <button type="button" aria-label="Ekle" className="shrink-0">
            <svg className="size-[62px]" viewBox="0 0 62 62" stroke="currentColor" strokeWidth="5" strokeLinecap="round">
              <path d="M31 3V59M3 31H59" />
            </svg>
          </button>
          <div className="ml-[39px] flex h-[111px] min-w-0 flex-1 items-center rounded-full border border-[#3c3c3c] bg-[#282828] pr-[33px] pl-10">
            <input
              type="text"
              aria-label="Mesaj"
              value={draft}
              onChange={(e) => setDraft(e.target.value)}
              className="w-full min-w-0 flex-1 bg-transparent text-[54px] outline-none"
            />
            <button type="button" aria-label="Çıkartma" className="shrink-0">
              <svg className="size-[57px]" viewBox="0 0 57 57" fill="none" stroke="currentColor" strokeWidth="4" strokeLinejoin="round">
                <path d="M54 29V21C54 8 48 3 36 3H21C8 3 3 9 3 21V36C3 49 9 54 21 54H24C36 54 54 39 54 29Z" />
                <path d="M28 54C32 49 30 45 31 40C33 33 39 33 44 33C49 33 53 32 54 28" />
              </svg>
            </button>
          </div>
          <button type="button" aria-label="Kamera" className="ml-14 shrink-0">
            <svg className="h-[57px] w-[71px]" viewBox="0 0 71 57" fill="none" stroke="currentColor" strokeWidth="4" strokeLinejoin="round">
              <path d="M10 10H17C21 10 23 8 24 6C25 3 27 2 30 2H41C44 2 46 3 47 6C48 8 50 10 54 10H61C66 10 69 13 69 17V48C69 52 66 55 61 55H10C5 55 2 52 2 48V17C2 13 5 10 10 10Z" />
              <circle cx="35" cy="31" r="14" />
              <circle cx="57" cy="20" r="4" fill="currentColor" stroke="none" />
            </svg>
          </button>
          <button type="button" aria-label="Sesli mesaj" className="ml-14 shrink-0">
            <svg className="h-[71px] w-[50px]" viewBox="0 0 50 71" fill="none" stroke="currentColor" strokeWidth="4" strokeLinecap="round">
              <rect x="14" y="2" width="22" height="46" rx="11" />
              <path d="M3 36C3 50 12 59 25 59S47 50 47 36M25 59V69" />
            </svg>
          </button>
        </div>
        <div className="mx-auto mt-[84px] h-[15px] w-[462px] rounded-full bg-white" />
      </footer>
    </div>
  );
}
